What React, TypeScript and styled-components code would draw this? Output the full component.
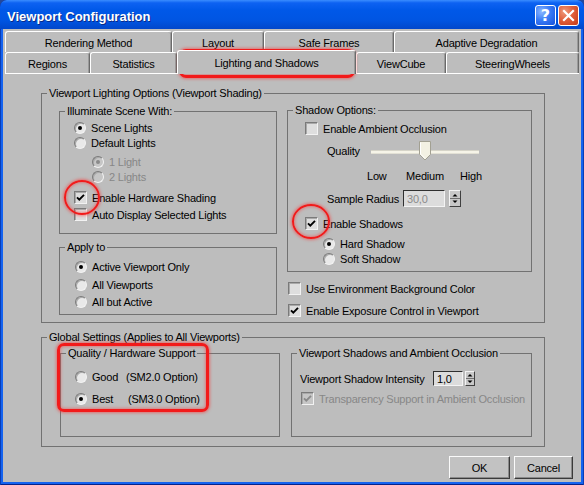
import React from "react";
import styled, { createGlobalStyle } from "styled-components";

const GRAY = "#bdbdbd";
const LINE = "#727272";
const FONT = `"Liberation Sans", Arial, sans-serif`;

const GlobalStyle = createGlobalStyle`
  * { box-sizing: border-box; }
  html, body { margin: 0; padding: 0; background: #24489a; }
  body { font-family: ${FONT}; font-size: 11px; }
`;

const Window = styled.div`
  position: relative;
  width: 584px;
  height: 485px;
  display: flex;
  flex-direction: column;
  background: #1463f0;
  border-radius: 7px 7px 0 0;
  box-shadow: inset 1px 0 0 #0a3db4, inset -1px 0 0 #0a3db4, inset 0 -1px 0 #06238a;
  overflow: hidden;
`;

const TitleBar = styled.div`
  height: 29px;
  flex: none;
  display: flex;
  align-items: center;
  gap: 2px;
  padding: 1px 5px 0 7px;
  border-radius: 7px 7px 0 0;
  background: linear-gradient(180deg, #3a8dff 0%, #0d62f2 10%, #0058e8 35%, #0055e2 70%, #0147cb 100%);
`;

const Title = styled.div`
  flex: 1;
  padding-top: 2px;
  color: #fff;
  font: bold 13px ${FONT};
  text-shadow: 1px 1px 0 #0a2a88;
`;

const CaptionButton = styled.div<{ $tone: "help" | "close" }>`
  width: 21px;
  height: 21px;
  display: flex;
  align-items: center;
  justify-content: center;
  border: 1px solid #fff;
  border-radius: 3px;
  color: #fff;
  font: bold 16px "DejaVu Sans", ${FONT};
  background: ${(p) =>
    p.$tone === "close"
      ? "radial-gradient(circle at 30% 30%, #ef9a7c 0%, #e0603c 45%, #c63a16 100%)"
      : "radial-gradient(circle at 30% 30%, #8db8ff 0%, #3a7cf6 45%, #1550dc 100%)"};
`;

const Client = styled.div`
  flex: 1;
  margin: 0 3px 3px;
  display: flex;
  flex-direction: column;
  background: ${GRAY};
  color: #000;
  font: 11px ${FONT};
  letter-spacing: -0.2px;
`;

const TabStrip = styled.div`
  margin: 2px 0 0 2px;
  width: 574px;
`;

const TabRow = styled.div`
  display: flex;
  height: 21px;
  align-items: flex-end;
`;

const Tab = styled.div<{ $w: number; $active?: boolean }>`
  position: relative;
  z-index: ${(p) => (p.$active ? 1 : 0)};
  width: ${(p) => p.$w}px;
  height: ${(p) => (p.$active ? 24 : 21)}px;
  margin-bottom: ${(p) => (p.$active ? -1 : 0)}px;
  display: flex;
  align-items: center;
  justify-content: center;
  background: ${GRAY};
  border-top: 1px solid #fff;
  border-left: 1px solid #fff;
  border-right: 1px solid #6a6a6a;
  border-radius: 3px 3px 0 0;
  box-shadow: inset -1px 0 0 #9a9a9a;
  padding-top: 1px;
`;

const Panel = styled.div`
  width: 574px;
  margin-left: 2px;
  border-top: 1px solid #fff;
  padding: 13px 34px 0 36px;
  display: flex;
  flex-direction: column;
  gap: 8px;
`;

const Group = styled.fieldset<{ $h: number; $mt?: number }>`
  margin: ${(p) => p.$mt ?? 0}px 0 0;
  padding: 0;
  min-width: 0;
  height: ${(p) => p.$h}px;
  border: 1px solid ${LINE};
`;

const Legend = styled.legend`
  margin-left: 5px;
  padding: 0 2px;
  height: 13px;
  line-height: 13px;
`;

const GroupBody = styled.div<{ $pt: number; $pl: number }>`
  padding: ${(p) => p.$pt}px 0 0 ${(p) => p.$pl}px;
`;

const Columns = styled.div<{ $left: number; $right: number; $gap: number }>`
  display: grid;
  grid-template-columns: ${(p) => p.$left}px ${(p) => p.$right}px;
  column-gap: ${(p) => p.$gap}px;
  align-items: start;
`;

const Stack = styled.div<{ $gap?: number }>`
  display: flex;
  flex-direction: column;
  gap: ${(p) => p.$gap ?? 0}px;
`;

const Row = styled.label<{ $mt?: number; $pl?: number; $h?: number; $dim?: boolean }>`
  display: flex;
  align-items: center;
  height: ${(p) => p.$h ?? 15}px;
  margin-top: ${(p) => p.$mt ?? 0}px;
  padding-left: ${(p) => p.$pl ?? 0}px;
  color: ${(p) => (p.$dim ? "#878787" : "#000")};
  white-space: nowrap;
`;

const Radio = styled.span<{ $on?: boolean; $dim?: boolean }>`
  position: relative;
  flex: none;
  width: 12px;
  height: 12px;
  margin-right: 5px;
  border-radius: 50%;
  border: 1px solid;
  border-color: #7a7a7a #f2f2f2 #f2f2f2 #7a7a7a;
  background: ${(p) => (p.$dim ? "#c6c6c6" : "#e9e9e9")};
  box-shadow: inset 1px 1px 0 #a9a9a9;
  &::after {
    content: "";
    display: ${(p) => (p.$on ? "block" : "none")};
    position: absolute;
    left: 3px;
    top: 3px;
    width: 4px;
    height: 4px;
    border-radius: 50%;
    background: ${(p) => (p.$dim ? "#8a8a8a" : "#000")};
  }
`;

const Box = styled.span<{ $dim?: boolean }>`
  flex: none;
  width: 13px;
  height: 13px;
  margin-right: 5px;
  display: flex;
  align-items: center;
  justify-content: center;
  border: 1px solid;
  border-color: #7a7a7a #f2f2f2 #f2f2f2 #7a7a7a;
  background: ${(p) => (p.$dim ? "#c6c6c6" : "#dedede")};
  box-shadow: inset 1px 1px 0 #a9a9a9;
`;

const Check = ({ on, dim }: { on?: boolean; dim?: boolean }) => (
  <Box $dim={dim}>
    {on && (
      <svg width="9" height="9" viewBox="0 0 9 9">
        <path d="M1 4.3 L3.3 6.7 L8 1.8" fill="none" stroke={dim ? "#8a8a8a" : "#000"} strokeWidth="1.9" />
      </svg>
    )}
  </Box>
);

const FieldLabel = styled.span<{ $w: number }>`
  width: ${(p) => p.$w}px;
  flex: none;
`;

const Field = styled.span<{ $w: number; $h: number; $dim?: boolean }>`
  width: ${(p) => p.$w}px;
  height: ${(p) => p.$h}px;
  display: flex;
  align-items: center;
  padding-left: 3px;
  border: 1px solid;
  border-color: #303030 #f4f4f4 #f4f4f4 #303030;
  background: #dcdcdc;
  color: ${(p) => (p.$dim ? "#8a8a8a" : "#000")};
`;

const Spinner = styled.span<{ $w: number; $h: number; $ml: number }>`
  width: ${(p) => p.$w}px;
  height: ${(p) => p.$h}px;
  margin-left: ${(p) => p.$ml}px;
  display: flex;
  border: 1px solid;
  border-color: #f4f4f4 #404040 #404040 #f4f4f4;
  background: #c8c8c8;
  svg { display: block; }
`;

const SpinArrows = ({ w, h }: { w: number; h: number }) => (
  <svg width={w - 2} height={h - 2} viewBox={`0 0 ${w - 2} ${h - 2}`}>
    <line x1="0" x2={w - 2} y1={(h - 2) / 2} y2={(h - 2) / 2} stroke="#707070" />
    <path
      d={`M${(w - 2) / 2 - 2.5} ${(h - 2) / 2 - 2} L${(w - 2) / 2} ${(h - 2) / 2 - 4.5} L${(w - 2) / 2 + 2.5} ${(h - 2) / 2 - 2} Z`}
      fill="#000"
    />
    <path
      d={`M${(w - 2) / 2 - 2.5} ${(h - 2) / 2 + 2} L${(w - 2) / 2} ${(h - 2) / 2 + 4.5} L${(w - 2) / 2 + 2.5} ${(h - 2) / 2 + 2} Z`}
      fill="#000"
    />
  </svg>
);

const Slider = styled.span`
  position: relative;
  width: 108px;
  height: 20px;
`;

const Track = styled.span`
  position: absolute;
  left: 0;
  right: 0;
  top: 9px;
  height: 4px;
  background: #f6f4e8;
  border-top: 1px solid #d6d4c8;
  border-bottom: 1px solid #e2e0d4;
`;

const Thumb = styled.svg`
  position: absolute;
  left: 48px;
  top: 0;
`;

const Ticks = styled.div`
  display: grid;
  grid-template-columns: 39px 54px auto;
`;

const Hint = styled.span<{ $w: number }>`
  display: inline-block;
  width: ${(p) => p.$w}px;
`;

const Buttons = styled.div`
  display: flex;
  justify-content: flex-end;
  gap: 4px;
  margin-top: 9px;
  padding-right: 8px;
`;

const Button = styled.button<{ $w: number }>`
  width: ${(p) => p.$w}px;
  height: 23px;
  padding: 0;
  font: 11px ${FONT};
  letter-spacing: -0.2px;
  color: #000;
  background: #c2c2c2;
  border: 1px solid;
  border-color: #fafafa #3a3a3a #3a3a3a #fafafa;
  box-shadow: inset -1px -1px 0 #8a8a8a;
`;

const Mark = styled.div<{ $x: number; $y: number; $w: number; $h: number; $round?: boolean }>`
  position: absolute;
  left: ${(p) => p.$x}px;
  top: ${(p) => p.$y}px;
  width: ${(p) => p.$w}px;
  height: ${(p) => p.$h}px;
  border: ${(p) => (p.$round ? 2 : 3)}px solid #f21a1a;
  border-radius: ${(p) => (p.$round ? "50%" : "7px")};
  box-shadow: 0 0 3px 1px rgba(255, 50, 50, 0.55), inset 0 0 3px 1px rgba(255, 50, 50, 0.45);
  pointer-events: none;
`;

const backTabs = [
  { label: "Rendering Method", w: 167 },
  { label: "Layout", w: 92 },
  { label: "Safe Frames", w: 130 },
  { label: "Adaptive Degradation", w: 185 },
];

const frontTabs = [
  { label: "Regions", w: 85 },
  { label: "Statistics", w: 87 },
  { label: "Lighting and Shadows", w: 179, active: true },
  { label: "ViewCube", w: 90 },
  { label: "SteeringWheels", w: 133 },
];

export default function App() {
  return (
    <>
      <GlobalStyle />
      <Window>
        <TitleBar>
          <Title>Viewport Configuration</Title>
          <CaptionButton $tone="help">?</CaptionButton>
          <CaptionButton $tone="close">
            <svg width="13" height="13" viewBox="0 0 13 13">
              <path d="M2 2 L11 11 M11 2 L2 11" stroke="#fff" strokeWidth="2.2" strokeLinecap="square" />
            </svg>
          </CaptionButton>
        </TitleBar>

        <Client>
          <TabStrip>
            <TabRow>
              {backTabs.map((t) => (
                <Tab key={t.label} $w={t.w}>{t.label}</Tab>
              ))}
            </TabRow>
            <TabRow>
              {frontTabs.map((t) => (
                <Tab key={t.label} $w={t.w} $active={t.active}>{t.label}</Tab>
              ))}
            </TabRow>
          </TabStrip>

          <Panel>
            <Group $h={236}>
              <Legend>Viewport Lighting Options (Viewport Shading)</Legend>
              <GroupBody $pt={5} $pl={17}>
                <Columns $left={218} $right={245} $gap={10}>
                  <Stack $gap={7}>
                    <Group $h={129}>
                      <Legend>Illuminate Scene With:</Legend>
                      <GroupBody $pt={2} $pl={14}>
                        <Row><Radio $on />Scene Lights</Row>
                        <Row><Radio />Default Lights</Row>
                        <Row $mt={4} $pl={18} $dim><Radio $on $dim />1 Light</Row>
                        <Row $pl={18} $dim><Radio $dim />2 Lights</Row>
                        <Row $mt={6}><Check on />Enable Hardware Shading</Row>
                        <Row $mt={2}><Check />Auto Display Selected Lights</Row>
                      </GroupBody>
                    </Group>
                    <Group $h={74}>
                      <Legend>Apply to</Legend>
                      <GroupBody $pt={5} $pl={15}>
                        <Row><Radio $on />Active Viewport Only</Row>
                        <Row $mt={3}><Radio />All Viewports</Row>
                        <Row $mt={2}><Radio />All but Active</Row>
                      </GroupBody>
                    </Group>
                  </Stack>

                  <Stack>
                    <Group $h={168} $mt={-1}>
                      <Legend>Shadow Options:</Legend>
                      <GroupBody $pt={4} $pl={17}>
                        <Row><Check />Enable Ambient Occlusion</Row>
                        <Row as="div" $mt={5} $h={20} $pl={22}>
                          <FieldLabel $w={44}>Quality</FieldLabel>
                          <Slider>
                            <Track />
                            <Thumb width="12" height="20" viewBox="0 0 12 20">
                              <path d="M0.5 0.5 H11.5 V13.5 L6 19 L0.5 13.5 Z" fill="#f3f1e3" stroke="#a2a092" />
                              <path d="M1.5 1.5 V13 L6 17.5" fill="none" stroke="#ffffff" />
                            </Thumb>
                          </Slider>
                        </Row>
                        <Row as="div" $mt={7} $pl={62}>
                          <Ticks>
                            <span>Low</span>
                            <span>Medium</span>
                            <span>High</span>
                          </Ticks>
                        </Row>
                        <Row as="div" $mt={7} $h={17} $pl={22}>
                          <FieldLabel $w={76}>Sample Radius</FieldLabel>
                          <Field $w={42} $h={17} $dim>30,0</Field>
                          <Spinner $w={12} $h={17} $ml={4}><SpinArrows w={12} h={17} /></Spinner>
                        </Row>
                        <Row $mt={9}><Check on />Enable Shadows</Row>
                        <Row $mt={5} $pl={18}><Radio $on />Hard Shadow</Row>
                        <Row $pl={18}><Radio />Soft Shadow</Row>
                      </GroupBody>
                    </Group>
                    <Row $mt={9} $pl={1}><Check />Use Environment Background Color</Row>
                    <Row $mt={7} $pl={1}><Check on />Enable Exposure Control in Viewport</Row>
                  </Stack>
                </Columns>
              </GroupBody>
            </Group>

            <Group $h={116}>
              <Legend>Global Settings (Applies to All Viewports)</Legend>
              <GroupBody $pt={3} $pl={18}>
                <Columns $left={220} $right={241} $gap={11}>
                  <Group $h={90}>
                    <Legend>Quality / Hardware Support</Legend>
                    <GroupBody $pt={9} $pl={14}>
                      <Row><Radio /><Hint $w={34}>Good</Hint>(SM2.0 Option)</Row>
                      <Row $mt={7}><Radio $on /><Hint $w={36}>Best</Hint>(SM3.0 Option)</Row>
                    </GroupBody>
                  </Group>
                  <Group $h={90}>
                    <Legend>Viewport Shadows and Ambient Occlusion</Legend>
                    <GroupBody $pt={10} $pl={8}>
                      <Row as="div" $h={17}>
                        <FieldLabel $w={133}>Viewport Shadow Intensity</FieldLabel>
                        <Field $w={30} $h={15}>1,0</Field>
                        <Spinner $w={10} $h={15} $ml={2}><SpinArrows w={10} h={15} /></Spinner>
                      </Row>
                      <Row $mt={4} $pl={1} $dim><Check on dim />Transparency Support in Ambient Occlusion</Row>
                    </GroupBody>
                  </Group>
                </Columns>
              </GroupBody>
            </Group>
          </Panel>

          <Buttons>
            <Button $w={61}>OK</Button>
            <Button $w={59}>Cancel</Button>
          </Buttons>
        </Client>

        <Mark $x={179} $y={49} $w={176} $h={29} />
        <Mark $x={64} $y={180} $w={36} $h={35} $round />
        <Mark $x={292} $y={204} $w={38} $h={35} $round />
        <Mark $x={57} $y={343} $w={152} $h={69} />
      </Window>
    </>
  );
}
